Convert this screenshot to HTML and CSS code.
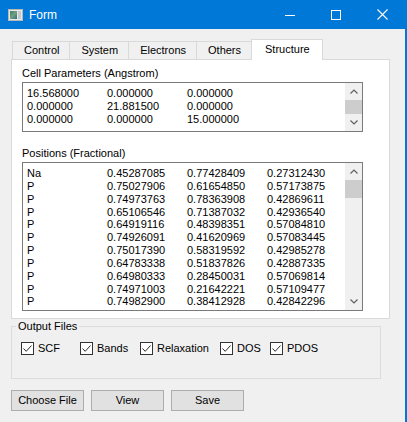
FILE: index.html
```html
<!DOCTYPE html>
<html>
<head>
<meta charset="utf-8">
<link rel="stylesheet" href="styles.css">
</head>
<body>
<div class="window">
  <div class="titlebar">
    <svg class="app-icon" width="15" height="12" viewBox="0 0 15 12">
      <defs>
        <linearGradient id="g" x1="0" y1="0" x2="1" y2="1">
          <stop offset="0" stop-color="#3f7a6e"/>
          <stop offset="0.5" stop-color="#6fa27c"/>
          <stop offset="1" stop-color="#2f6b8a"/>
        </linearGradient>
      </defs>
      <rect x="0.5" y="0.5" width="14" height="11" fill="#e8e8e8" stroke="#b8b8b8"/>
      <rect x="2" y="2" width="7" height="8" fill="url(#g)"/>
      <rect x="10" y="2" width="3" height="8" fill="#c8c8c8"/>
    </svg>
    <span class="title">Form</span>
    <div class="caption-buttons">
      <div class="cap"><svg width="10" height="10" viewBox="0 0 10 10"><line x1="0" y1="5.5" x2="10" y2="5.5" stroke="#fff" stroke-width="1"/></svg></div>
      <div class="cap"><svg width="10" height="10" viewBox="0 0 10 10"><rect x="0.5" y="0.5" width="9" height="9" fill="none" stroke="#fff" stroke-width="1"/></svg></div>
      <div class="cap"><svg width="11" height="11" viewBox="0 0 11 11"><path d="M0.5 0.5 L10.5 10.5 M10.5 0.5 L0.5 10.5" stroke="#fff" stroke-width="1.1" fill="none"/></svg></div>
    </div>
  </div>

  <div class="client">
    <div class="tabs">
      <div class="tab">Control</div>
      <div class="tab">System</div>
      <div class="tab">Electrons</div>
      <div class="tab">Others</div>
      <div class="tab active">Structure</div>
    </div>
    <div class="pane">
      <div class="label">Cell Parameters (Angstrom)</div>
      <div class="box cell-box">
        <div class="box-content cols3">
          <span>16.568000</span><span>0.000000</span><span>0.000000</span>
          <span>0.000000</span><span>21.881500</span><span>0.000000</span>
          <span>0.000000</span><span>0.000000</span><span>15.000000</span>
        </div>
        <div class="scrollbar">
          <div class="arrow"><svg width="8" height="5" viewBox="0 0 8 5"><path d="M0.5 4.5 L4 1 L7.5 4.5" fill="none" stroke="#606060" stroke-width="1.2"/></svg></div>
          <div class="track"><div class="thumb thumb-full"></div></div>
          <div class="arrow"><svg width="8" height="5" viewBox="0 0 8 5"><path d="M0.5 0.5 L4 4 L7.5 0.5" fill="none" stroke="#606060" stroke-width="1.2"/></svg></div>
        </div>
      </div>

      <div class="label label-gap">Positions (Fractional)</div>
      <div class="box pos-box">
        <div class="box-content cols4">
          <span>Na</span><span>0.45287085</span><span>0.77428409</span><span>0.27312430</span>
          <span>P</span><span>0.75027906</span><span>0.61654850</span><span>0.57173875</span>
          <span>P</span><span>0.74973763</span><span>0.78363908</span><span>0.42869611</span>
          <span>P</span><span>0.65106546</span><span>0.71387032</span><span>0.42936540</span>
          <span>P</span><span>0.64919116</span><span>0.48398351</span><span>0.57084810</span>
          <span>P</span><span>0.74926091</span><span>0.41620969</span><span>0.57083445</span>
          <span>P</span><span>0.75017390</span><span>0.58319592</span><span>0.42985278</span>
          <span>P</span><span>0.64783338</span><span>0.51837826</span><span>0.42887335</span>
          <span>P</span><span>0.64980333</span><span>0.28450031</span><span>0.57069814</span>
          <span>P</span><span>0.74971003</span><span>0.21642221</span><span>0.57109477</span>
          <span>P</span><span>0.74982900</span><span>0.38412928</span><span>0.42842296</span>
        </div>
        <div class="scrollbar">
          <div class="arrow"><svg width="8" height="5" viewBox="0 0 8 5"><path d="M0.5 4.5 L4 1 L7.5 4.5" fill="none" stroke="#606060" stroke-width="1.2"/></svg></div>
          <div class="track"><div class="thumb thumb-pos"></div></div>
          <div class="arrow"><svg width="8" height="5" viewBox="0 0 8 5"><path d="M0.5 0.5 L4 4 L7.5 0.5" fill="none" stroke="#606060" stroke-width="1.2"/></svg></div>
        </div>
      </div>
    </div>

    <fieldset class="group">
      <legend>Output Files</legend>
      <div class="checks">
        <div class="check"><span class="cbox"><svg width="11" height="11" viewBox="0 0 11 11"><path d="M1.5 5.5 L4.2 8.3 L9.5 2.5" fill="none" stroke="#2b2b2b" stroke-width="1"/></svg></span>SCF</div>
        <div class="check"><span class="cbox"><svg width="11" height="11" viewBox="0 0 11 11"><path d="M1.5 5.5 L4.2 8.3 L9.5 2.5" fill="none" stroke="#2b2b2b" stroke-width="1"/></svg></span>Bands</div>
        <div class="check"><span class="cbox"><svg width="11" height="11" viewBox="0 0 11 11"><path d="M1.5 5.5 L4.2 8.3 L9.5 2.5" fill="none" stroke="#2b2b2b" stroke-width="1"/></svg></span>Relaxation</div>
        <div class="check"><span class="cbox"><svg width="11" height="11" viewBox="0 0 11 11"><path d="M1.5 5.5 L4.2 8.3 L9.5 2.5" fill="none" stroke="#2b2b2b" stroke-width="1"/></svg></span>DOS</div>
        <div class="check"><span class="cbox"><svg width="11" height="11" viewBox="0 0 11 11"><path d="M1.5 5.5 L4.2 8.3 L9.5 2.5" fill="none" stroke="#2b2b2b" stroke-width="1"/></svg></span>PDOS</div>
      </div>
    </fieldset>

    <div class="buttons">
      <div class="btn">Choose File</div>
      <div class="btn">View</div>
      <div class="btn">Save</div>
    </div>
  </div>
</div>
</body>
</html>
```

FILE: styles.css
```css
* { box-sizing: border-box; }
html, body {
  margin: 0;
  padding: 0;
  background: #f0f0f0;
}
body {
  font-family: "Liberation Sans", Arial, sans-serif;
  font-size: 11px;
  color: #000;
}
.window {
  width: 407px;
  height: 422px;
  background: #f0f0f0;
  border-right: 2px solid #0078d7;
  overflow: hidden;
}
.titlebar {
  height: 29px;
  background: #0078d7;
  display: flex;
  align-items: center;
  padding-left: 8px;
  color: #fff;
}
.app-icon { display: block; margin-top: 1px; }
.title {
  margin-left: 6px;
  font-size: 12px;
  line-height: 14px;
}
.caption-buttons {
  margin-left: auto;
  display: flex;
  height: 29px;
}
.cap {
  width: 46px;
  height: 29px;
  display: flex;
  align-items: center;
  justify-content: center;
}
.cap svg { display: block; }

.client {
  padding: 10px 0 0 11px;
}
.tabs {
  display: flex;
  align-items: flex-end;
  height: 20px;
  margin-left: 1px;
  position: relative;
  z-index: 1;
}
.tab {
  height: 18px;
  line-height: 16px;
  padding: 0 10px 0 11px;
  border: 1px solid #d9d9d9;
  border-bottom: none;
  margin-right: -1px;
  background: #f0f0f0;
  white-space: nowrap;
}
.tab.active {
  height: 21px;
  line-height: 18px;
  margin-bottom: -1px;
  padding: 0 12px 0 13px;
  background: #fff;
}
.pane {
  width: 379px;
  background: #fff;
  border: 1px solid #d9d9d9;
  padding: 6px 26px 7px 10px;
}
.label {
  line-height: 14px;
  height: 14px;
  margin-bottom: 2px;
  white-space: nowrap;
}
.label-gap { margin-top: 14px; }

.box {
  display: flex;
  border: 1px solid #7a7a7a;
  background: #fff;
  width: 341px;
}
.cell-box { height: 50px; }
.pos-box { height: 149px; }
.box-content {
  flex: 1;
  display: grid;
  align-content: start;
  padding: 4px 0 0 4px;
  line-height: 12.85px;
  white-space: nowrap;
  overflow: hidden;
}
.cols3 { grid-template-columns: 80px 80px 80px; }
.cols4 { grid-template-columns: 80px 80px 80px 80px; }

.scrollbar {
  width: 17px;
  background: #f0f0f0;
  display: flex;
  flex-direction: column;
}
.arrow {
  height: 17px;
  display: flex;
  align-items: center;
  justify-content: center;
}
.arrow svg { display: block; }
.track { flex: 1; }
.thumb { background: #cdcdcd; }
.thumb-full { height: 100%; }
.thumb-pos { height: 18px; }

.group {
  margin: 0;
  padding: 0 0 23px 0;
  width: 370px;
  border: 1px solid #dcdcdc;
}
.group legend {
  margin-left: 4px;
  padding: 0 2px;
  line-height: 14px;
}
.checks {
  display: grid;
  grid-template-columns: 59px 60px 80px 50px auto;
  padding: 8px 0 0 9px;
  line-height: 14px;
}
.check {
  display: flex;
  align-items: center;
  white-space: nowrap;
}
.cbox {
  width: 13px;
  height: 13px;
  border: 1px solid #333;
  background: #fff;
  margin-right: 4px;
  display: flex;
}
.cbox svg { display: block; }

.buttons {
  display: flex;
  gap: 7px;
  margin-top: 11px;
}
.btn {
  width: 73px;
  height: 21px;
  line-height: 19px;
  text-align: center;
  background: #e1e1e1;
  border: 1px solid #adadad;
}
```
